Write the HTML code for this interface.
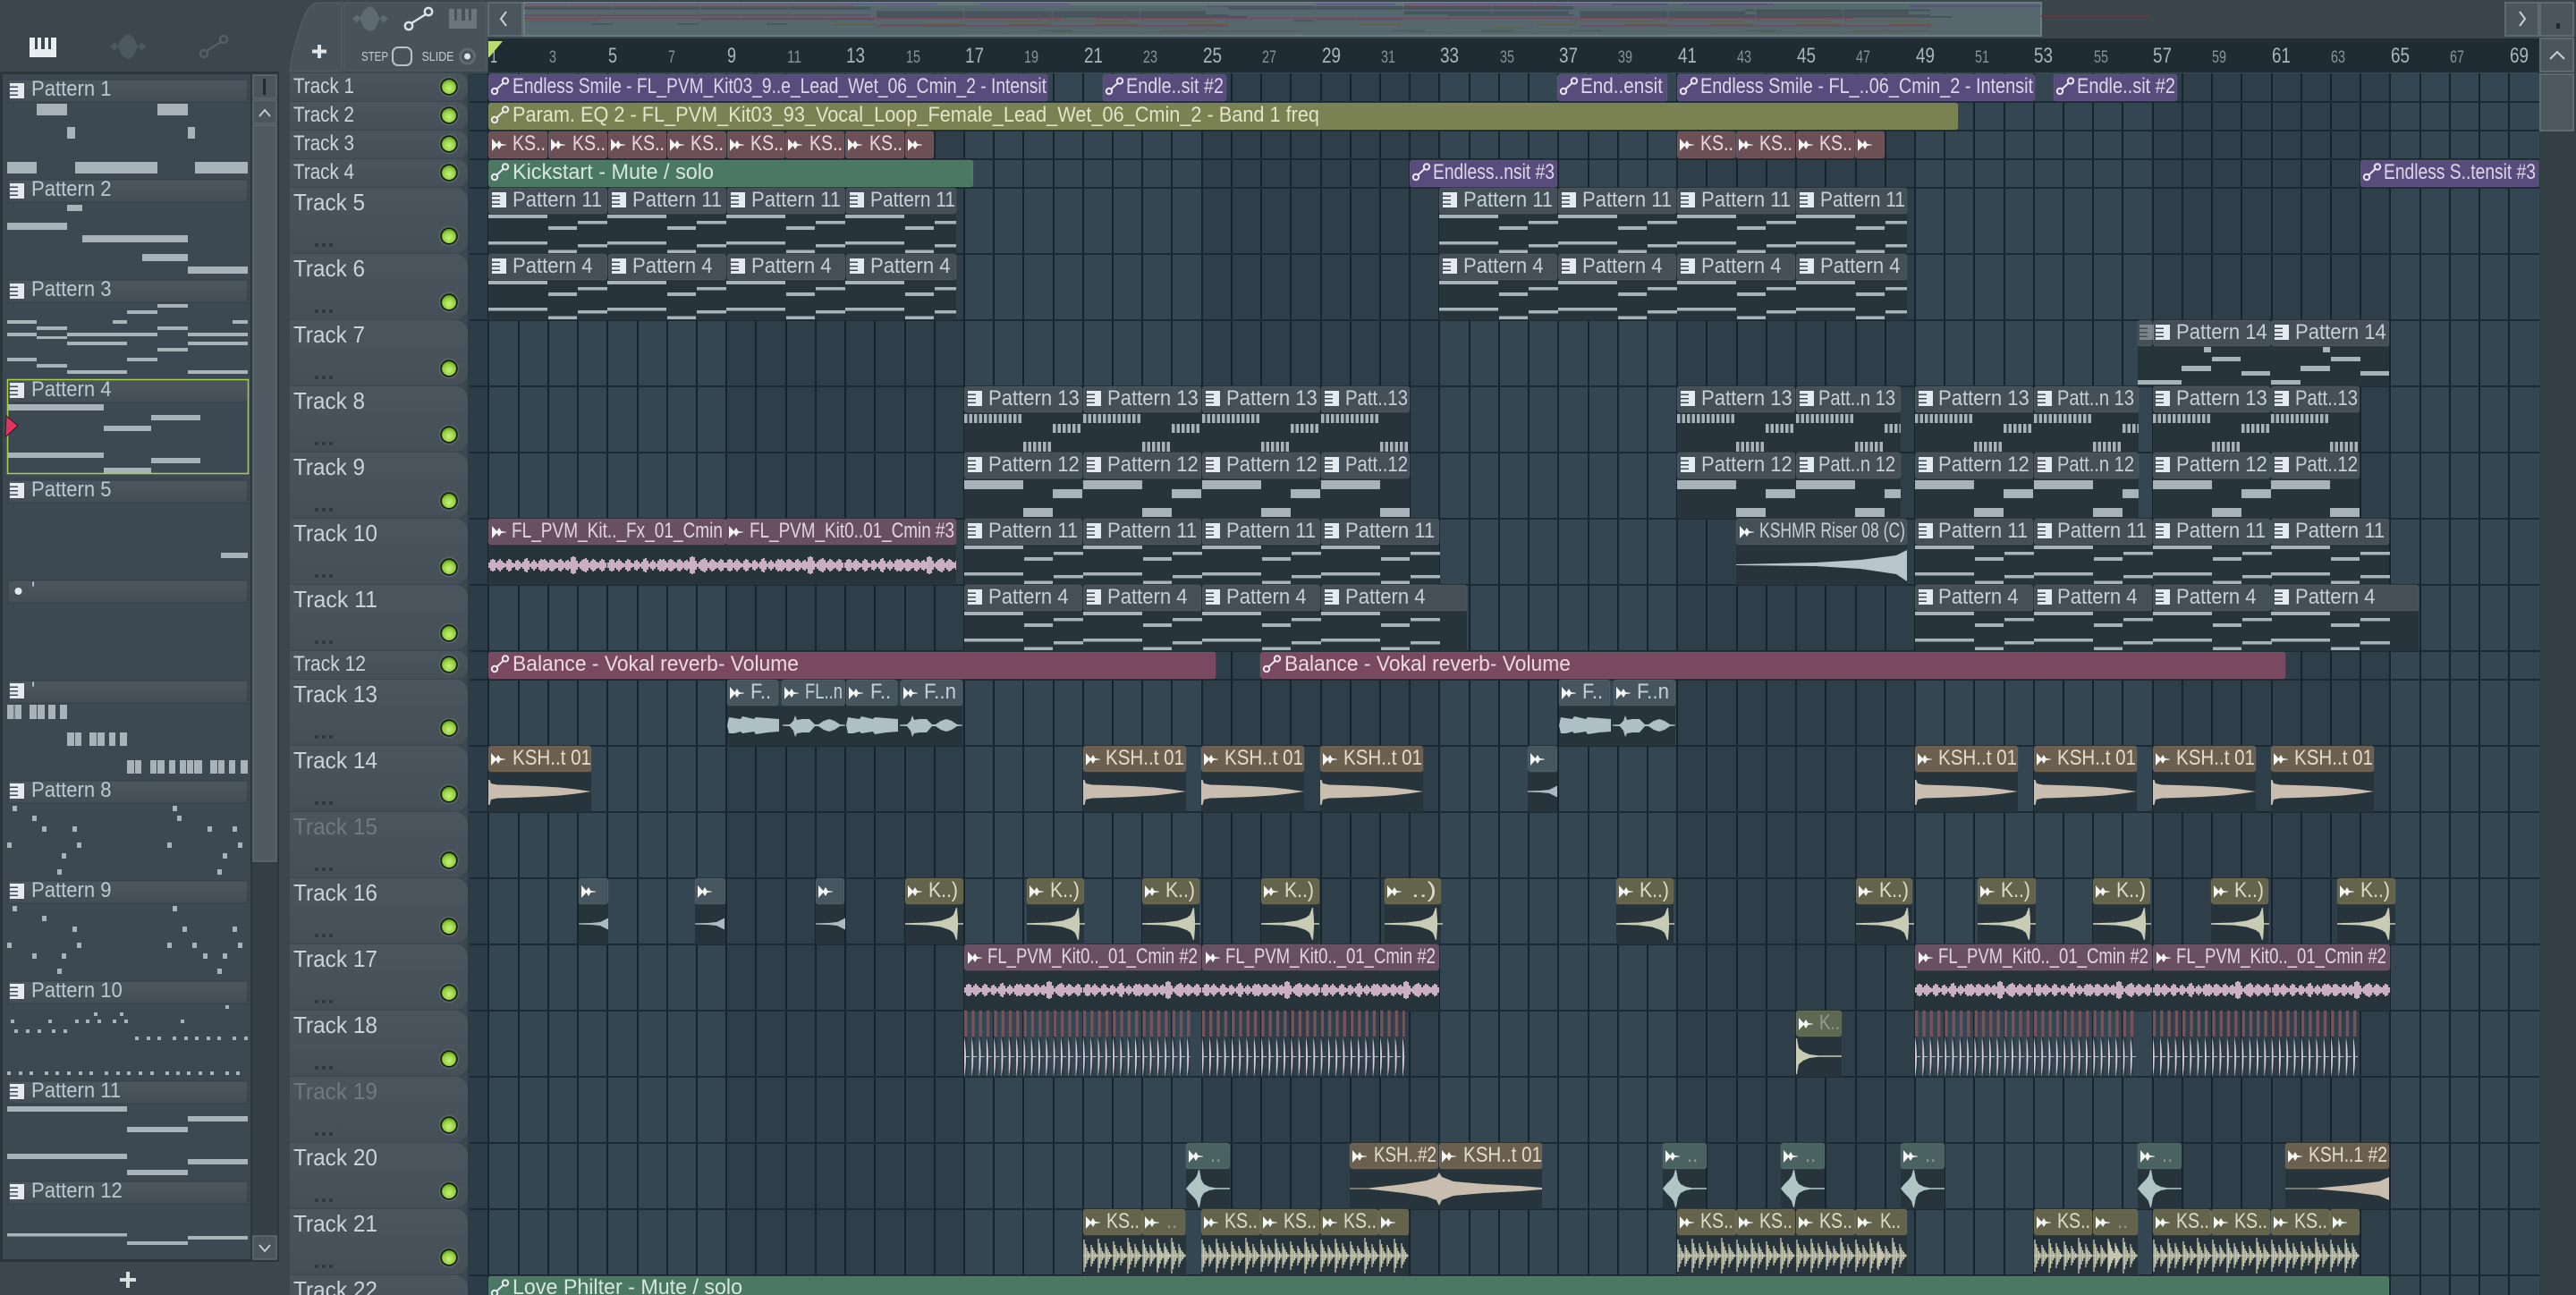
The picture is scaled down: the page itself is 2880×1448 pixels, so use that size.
<!DOCTYPE html>
<html><head><meta charset="utf-8"><title>Playlist</title>
<style>
html,body{margin:0;padding:0;background:#3b464d;width:2880px;height:1448px;overflow:hidden}
svg{display:block}
text{font-family:"Liberation Sans",sans-serif;font-size:24px}
text:not([textLength]){transform-box:fill-box;transform-origin:0 50%;transform:scaleX(.92)}
#heads rect{rx:3px;stroke:#fff;stroke-opacity:.07}
.big text{font-size:26px}
.s14 text{font-size:14.5px}
</style></head><body>
<svg width="2880" height="1448" viewBox="0 0 2880 1448" xmlns="http://www.w3.org/2000/svg">
<defs>
<linearGradient id="tg" x1="0" y1="0" x2="0" y2="1"><stop offset="0" stop-color="#4b555d"/><stop offset="1" stop-color="#454f58"/></linearGradient>
<linearGradient id="hg" x1="0" y1="0" x2="0" y2="1"><stop offset="0" stop-color="#4c565d"/><stop offset="1" stop-color="#444e56"/></linearGradient>
<radialGradient id="led" cx=".5" cy=".62" r=".6"><stop offset="0" stop-color="#c8f278"/><stop offset=".7" stop-color="#93cf3e"/><stop offset="1" stop-color="#5d9a1f"/></radialGradient>
<pattern id="tk" width="5.500" height="10" patternUnits="userSpaceOnUse"><rect width="3.500" height="10" fill="#a7b2b9"/></pattern>
<pattern id="s18" width="8.305" height="74" patternUnits="userSpaceOnUse" patternTransform="translate(1078,1130)">
<rect width="3.400" height="29" fill="#745359"/><rect y="30" width="3.400" height="44" fill="#2a3a44"/>
<path d="M0 30C2.600 42 2.600 62 0 74Z" fill="#dccbd4"/><rect y="51" width="6" height="1" fill="#cbbcc5"/></pattern>
<g id="pi"><path fill="#e3ebf0" d="M0 0H16V17H0Z"/><path fill="#3f4a52" d="M0 3.500H9V5H0ZM0 8H9V9.500H0ZM0 12.500H9V14H0Z"/></g>
<path id="au" fill="#f3f5f2" d="M0-1L5.500 5L8 1L10.500 5L16 5.800V6.400L10.500 7L8 11L5.500 7L0 13Z"/>
<g id="ln" fill="none" stroke="#e9e6f0" stroke-width="2"><circle cx="5" cy="15" r="3.200"/><circle cx="17" cy="3.500" r="3.200"/><path d="M7.500 12.500L14.500 6"/></g>
<g id="p11" fill="#a7b2b9"><path d="M0 30H66V34H0ZM67 43H99V47H67ZM100 37H133V40.500H100ZM0 60H66V63.500H0ZM67 69.500H99V73H67ZM100 63H133V66.500H100Z"/></g>
<g id="p12" fill="#a7b2b9"><path d="M0 31H66V41H0ZM66 62H99V72H66ZM99 41H132V51H99Z"/></g>
<g id="p13"><path fill="url(#tk)" d="M0 31H66V41H0ZM66 62H99V73H66ZM99 42H132V52H99Z"/></g>
<g id="w10"><path fill="none" stroke="#c9aec4" stroke-width="2.100" d="M1-3V3M3-6V6M5-7V7M7-6V6M9-3V3M11-5V5M13-7V7M15-5V5M17-3V3M19-2V2M21-5V5M23-7V7M25-6V6M27-3V3M29-2V2M31-5V5M33-6V6M35-4V4M37-2V2M39-4V4M41-7V7M43-8V8M45-5V5M47-2V2M49-4V4M51-6V6M53-4V4M55-2V2M57-5V5M59-7V7M61-6V6M63-7V7M65-5V5M67-3V3M69-6V6M71-7V7M73-6V6M75-4V4M77-3V3M79-6V6M81-7V7M83-5V5M85-3V3M87-5V5M89-6V6M91-4V4M93-9V9M95-10V10M97-9V9M99-5V5M101-2V2M103-4V4M105-6V6M107-7V7M109-8V8M111-6V6M113-3V3M115-5V5M117-7V7M119-6V6M121-4V4M123-3V3M125-5V5M127-7V7M129-6V6M131-3V3"/></g>
<path id="w14" fill="#c8bdae" d="M0-13L1.500-13L3-9L10-7.500L28-7L55-6L80-4.500L98-2.500L115 0L98 2.500L80 4.500L55 6L28 7L10 7.500L3 9L1.500 15L0 15Z"/>
<g id="w16a"><path fill="#a9bac2" d="M0-.6L14-1L24-2L30-5L33-6.500V6.500L30 5L24 2L14 1L0 .6Z"/></g>
<g id="w16b"><path fill="#c8ccb4" d="M0-.7L25-1.500L40-3.500L50-7L54-10L57-18L58-18L59-4V-.7H65V.7H59V4L58 18L57 18L54 10L50 7L40 3.500L25 1.500L0 .7Z"/></g>
<path id="w18" fill="#c8ccb4" d="M0-20H1L3-9L8-5L15-2L25-.8H51V.8H25L15 2L8 5L3 9L1 20H0Z"/>
<path id="w20" fill="#b0c6c4" d="M0 0L4-5L9-10L12-14L14-21L15-21L17-10L20-5L26-2L33-.8H49V.8H33L26 2L20 5L17 10L15 21L14 21L12 14L9 10L4 5Z"/>
<path id="f1" fill="#aebfc6" d="M0 0L2-9L8-8L15-7L17-10L30-7L32-9L45-8L58-7V7L45 8L32 10L30 7L17 9L15 7L8 9L2 9Z"/>
<path id="f2" fill="#aebfc6" d="M0-.6L8-1L12-5L14-11L16-6L22-7L30-7L36-1L40-1L46-5L52-7L58-5L64-1L70-.5V.5L64 1L58 5L52 7L46 5L40 1L36 1L30 8L22 8L16 9L14 13L12 6L8 1L0 .6Z"/>
<g id="sph"><path fill="none" stroke="#c6c7ae" stroke-width="1.300" d="M0 0H33M1-18V18M2.500-13V13M4-9V9M5.500-5V5M7-3V3M9-12V12M10.500-9V9M12-6V6M13.500-3.500V3.500M15-2V2M17-19V19M18.500-14V14M20-9V9M21.500-5V5M23-3V3M25-14V14M26.500-10V10M28-7V7M29.500-4V4M31-2V2"/></g>
<g id="sph2"><path fill="none" stroke="#c6c7ae" stroke-width="1.300" d="M0 0H33M1-16V16M2.500-12V12M4-8V8M5.500-5V5M7-3V3M9-11V11M10.500-8V8M12-5V5M13.500-3V3M15-2V2M17-20V20M18.500-15V15M20-10V10M21.500-6V6M23-3V3M25-13V13M26.500-9V9M28-6V6M29.500-4V4M31-2V2"/></g>
<g id="sp"><use href="#sph"/><use href="#sph2" x="33"/></g>
<path id="wv" d="M0 14L5.500 9.500L9 12.500L12.500 5.500L16 2.500L20.500 0L25 2.500L28 7.500L31 14L35 9.500L40.500 14L35 18.500L31 14L28 21L25 26L20.500 28L16 26L12.500 23L9 14L5.500 18.500Z"/>
<clipPath id="c10"><rect x="546" y="600" width="523" height="54"/></clipPath>

<g id="bods" fill="#28343c">
<path d="M546 239H1069V284H546ZM1609 239H2132V284H1609ZM546 313H1069V358H546ZM1609 313H2132V358H1609ZM2390 387H2671V432H2390ZM1078 461H1576V506H1078ZM1875 461H2125V506H1875ZM2141 461H2391V506H2141ZM2407 461H2638V506H2407ZM1078 535H1576V580H1078ZM1875 535H2125V580H1875ZM2141 535H2391V580H2141ZM2407 535H2638V580H2407ZM546 609H1069V654H546ZM1078 609H1609V654H1078ZM1941 609H2132V654H1941ZM2141 609H2671V654H2141ZM1078 683H1640V728H1078ZM2141 683H2704V728H2141ZM813 789H1076V834H813ZM1743 789H1873V834H1743ZM546 863H661V908H546ZM1211 863H1326V908H1211ZM1343 863H1458V908H1343ZM1476 863H1591V908H1476ZM1708 863H1741V908H1708ZM2141 863H2256V908H2141ZM2274 863H2389V908H2274ZM2407 863H2522V908H2407ZM2539 863H2654V908H2539ZM647 1011H680V1056H647ZM777 1011H811V1056H777ZM912 1011H944V1056H912ZM1012 1011H1077V1056H1012ZM1148 1011H1212V1056H1148ZM1277 1011H1341V1056H1277ZM1410 1011H1475V1056H1410ZM1548 1011H1611V1056H1548ZM1807 1011H1871V1056H1807ZM2075 1011H2138V1056H2075ZM2211 1011H2276V1056H2211ZM2340 1011H2404V1056H2340ZM2472 1011H2536V1056H2472ZM2613 1011H2678V1056H2613ZM1078 1085H1609V1130H1078ZM2141 1085H2672V1130H2141ZM2008 1159H2059V1204H2008ZM1326 1307H1375V1352H1326ZM1509 1307H1724V1352H1509ZM1859 1307H1907V1352H1859ZM1991 1307H2040V1352H1991ZM2125 1307H2174V1352H2125ZM2390 1307H2439V1352H2390ZM2555 1307H2671V1352H2555ZM1211 1381H1326V1426H1211ZM1343 1381H1575V1426H1343ZM1875 1381H2132V1426H1875ZM2274 1381H2390V1426H2274ZM2407 1381H2638V1426H2407Z"/>
</g>

<g id="heads">
<g fill="#584c7c">
<rect x="546" y="83" width="625" height="30"/><rect x="1233" y="83" width="138" height="30"/><rect x="1741" y="83" width="123" height="30"/><rect x="1875" y="83" width="400" height="30"/><rect x="2296" y="83" width="138" height="30"/>
<rect x="1576" y="179" width="165" height="30"/><rect x="2639" y="179" width="199" height="30"/>
</g>
<g fill="#7a8152"><rect x="546" y="115" width="1643" height="30"/></g>
<g fill="#6d5056">
<rect x="546" y="147" width="66" height="30"/><rect x="613" y="147" width="66" height="30"/><rect x="680" y="147" width="65" height="30"/><rect x="746" y="147" width="66" height="30"/><rect x="813" y="147" width="64" height="30"/><rect x="878" y="147" width="66" height="30"/><rect x="945" y="147" width="66" height="30"/><rect x="1012" y="147" width="32" height="30"/>
<rect x="1875" y="147" width="65" height="30"/><rect x="1941" y="147" width="66" height="30"/><rect x="2008" y="147" width="65" height="30"/><rect x="2074" y="147" width="33" height="30"/>
</g>
<g fill="#4a7862"><rect x="546" y="179" width="542" height="30"/><rect x="546" y="1427" width="2125" height="30"/></g>
<g fill="#454f57">
<rect x="546" y="210" width="133" height="29"/><rect x="680" y="210" width="132" height="29"/><rect x="813" y="210" width="132" height="29"/><rect x="946" y="210" width="123" height="29"/>
<rect x="1609" y="210" width="132" height="29"/><rect x="1742" y="210" width="132" height="29"/><rect x="1875" y="210" width="132" height="29"/><rect x="2008" y="210" width="124" height="29"/>
<rect x="546" y="284" width="133" height="29"/><rect x="680" y="284" width="132" height="29"/><rect x="813" y="284" width="132" height="29"/><rect x="946" y="284" width="123" height="29"/>
<rect x="1609" y="284" width="132" height="29"/><rect x="1742" y="284" width="132" height="29"/><rect x="1875" y="284" width="132" height="29"/><rect x="2008" y="284" width="124" height="29"/>
<rect x="2390" y="358" width="16" height="29"/><rect x="2407" y="358" width="131" height="29"/><rect x="2539" y="358" width="132" height="29"/>
<rect x="1078" y="432" width="132" height="29"/><rect x="1211" y="432" width="132" height="29"/><rect x="1344" y="432" width="132" height="29"/><rect x="1477" y="432" width="99" height="29"/><rect x="1875" y="432" width="132" height="29"/><rect x="2008" y="432" width="117" height="29"/><rect x="2141" y="432" width="132" height="29"/><rect x="2274" y="432" width="117" height="29"/><rect x="2407" y="432" width="131" height="29"/><rect x="2539" y="432" width="99" height="29"/>
<rect x="1078" y="506" width="132" height="29"/><rect x="1211" y="506" width="132" height="29"/><rect x="1344" y="506" width="132" height="29"/><rect x="1477" y="506" width="99" height="29"/><rect x="1875" y="506" width="132" height="29"/><rect x="2008" y="506" width="117" height="29"/><rect x="2141" y="506" width="132" height="29"/><rect x="2274" y="506" width="117" height="29"/><rect x="2407" y="506" width="131" height="29"/><rect x="2539" y="506" width="99" height="29"/>
<rect x="1078" y="580" width="132" height="29"/><rect x="1211" y="580" width="132" height="29"/><rect x="1344" y="580" width="132" height="29"/><rect x="1477" y="580" width="132" height="29"/><rect x="1941" y="580" width="191" height="29"/><rect x="2141" y="580" width="132" height="29"/><rect x="2274" y="580" width="132" height="29"/><rect x="2407" y="580" width="131" height="29"/><rect x="2539" y="580" width="132" height="29"/>
<rect x="1078" y="654" width="132" height="29"/><rect x="1211" y="654" width="132" height="29"/><rect x="1344" y="654" width="132" height="29"/><rect x="1477" y="654" width="163" height="29"/><rect x="2141" y="654" width="132" height="29"/><rect x="2274" y="654" width="132" height="29"/><rect x="2407" y="654" width="131" height="29"/><rect x="2539" y="654" width="165" height="29"/>
</g>
<g fill="#684f62">
<rect x="546" y="580" width="265" height="29"/><rect x="811" y="580" width="258" height="29"/>
<rect x="1078" y="1056" width="265" height="29"/><rect x="1344" y="1056" width="265" height="29"/><rect x="2141" y="1056" width="265" height="29"/><rect x="2407" y="1056" width="265" height="29"/>
</g>
<g fill="#78495f"><rect x="546" y="729" width="813" height="30"/><rect x="1409" y="729" width="1146" height="30"/></g>
<g fill="#47565e">
<rect x="813" y="760" width="57" height="29"/><rect x="874" y="760" width="71" height="29"/><rect x="946" y="760" width="57" height="29"/><rect x="1007" y="760" width="69" height="29"/><rect x="1743" y="760" width="57" height="29"/><rect x="1804" y="760" width="69" height="29"/>
<rect x="1708" y="834" width="33" height="29"/>
<rect x="647" y="982" width="33" height="29"/><rect x="777" y="982" width="34" height="29"/><rect x="912" y="982" width="32" height="29"/>
</g>
<g fill="#6b5f4f">
<rect x="546" y="834" width="115" height="29"/><rect x="1211" y="834" width="115" height="29"/><rect x="1343" y="834" width="115" height="29"/><rect x="1476" y="834" width="115" height="29"/><rect x="2141" y="834" width="115" height="29"/><rect x="2274" y="834" width="115" height="29"/><rect x="2407" y="834" width="115" height="29"/><rect x="2539" y="834" width="115" height="29"/>
<rect x="1509" y="1278" width="99" height="29"/><rect x="1609" y="1278" width="115" height="29"/><rect x="2555" y="1278" width="116" height="29"/>
</g>
<g fill="#64634b">
<rect x="1012" y="982" width="65" height="29"/><rect x="1148" y="982" width="64" height="29"/><rect x="1277" y="982" width="64" height="29"/><rect x="1410" y="982" width="65" height="29"/><rect x="1548" y="982" width="63" height="29"/><rect x="1807" y="982" width="64" height="29"/><rect x="2075" y="982" width="63" height="29"/><rect x="2211" y="982" width="65" height="29"/><rect x="2340" y="982" width="64" height="29"/><rect x="2472" y="982" width="64" height="29"/><rect x="2613" y="982" width="65" height="29"/>
<rect x="1211" y="1352" width="66" height="29"/><rect x="1277" y="1352" width="48" height="29"/><rect x="1343" y="1352" width="66" height="29"/><rect x="1409" y="1352" width="66" height="29"/><rect x="1476" y="1352" width="65" height="29"/><rect x="1541" y="1352" width="34" height="29"/>
<rect x="1875" y="1352" width="66" height="29"/><rect x="1941" y="1352" width="66" height="29"/><rect x="2008" y="1352" width="66" height="29"/><rect x="2074" y="1352" width="58" height="29"/>
<rect x="2274" y="1352" width="65" height="29"/><rect x="2340" y="1352" width="50" height="29"/><rect x="2407" y="1352" width="65" height="29"/><rect x="2472" y="1352" width="66" height="29"/><rect x="2539" y="1352" width="66" height="29"/><rect x="2605" y="1352" width="33" height="29"/>
</g>
<g fill="#5c6852"><rect x="2008" y="1130" width="51" height="29"/></g>
<g fill="#4a6360"><rect x="1326" y="1278" width="49" height="29"/><rect x="1859" y="1278" width="49" height="29"/><rect x="1991" y="1278" width="49" height="29"/><rect x="2125" y="1278" width="49" height="29"/><rect x="2390" y="1278" width="49" height="29"/></g>
</g>
</defs>

<!-- base -->
<rect width="2880" height="1448" fill="#3b464d"/>

<!-- grid -->
<rect x="523" y="82" width="2316" height="1366" fill="#344651"/>
<rect x="523" y="82" width="23" height="1366" fill="#2d3d47"/>
<path fill="#2e3f49" d="M812 82H1078V1448H812ZM1344 82H1609V1448H1344ZM1875 82H2141V1448H1875ZM2407 82H2672V1448H2407Z"/>
<path fill="none" stroke="#17242d" stroke-width="2" d="M546 82V1448M580 82V1448M613 82V1448M646 82V1448M679 82V1448M713 82V1448M746 82V1448M779 82V1448M812 82V1448M845 82V1448M879 82V1448M912 82V1448M945 82V1448M978 82V1448M1012 82V1448M1045 82V1448M1078 82V1448M1111 82V1448M1144 82V1448M1178 82V1448M1211 82V1448M1244 82V1448M1277 82V1448M1310 82V1448M1344 82V1448M1377 82V1448M1410 82V1448M1443 82V1448M1477 82V1448M1510 82V1448M1543 82V1448M1576 82V1448M1609 82V1448M1643 82V1448M1676 82V1448M1709 82V1448M1742 82V1448M1776 82V1448M1809 82V1448M1842 82V1448M1875 82V1448M1908 82V1448M1942 82V1448M1975 82V1448M2008 82V1448M2041 82V1448M2075 82V1448M2108 82V1448M2141 82V1448M2174 82V1448M2207 82V1448M2241 82V1448M2274 82V1448M2307 82V1448M2340 82V1448M2373 82V1448M2407 82V1448M2440 82V1448M2473 82V1448M2506 82V1448M2540 82V1448M2573 82V1448M2606 82V1448M2639 82V1448M2672 82V1448M2706 82V1448M2739 82V1448M2772 82V1448M2805 82V1448"/>
<path fill="none" stroke="#1c2a33" stroke-width="2" d="M523 114H2839M523 146H2839M523 178H2839M523 210H2839M523 284H2839M523 358H2839M523 432H2839M523 506H2839M523 580H2839M523 654H2839M523 728H2839M523 760H2839M523 834H2839M523 908H2839M523 982H2839M523 1056H2839M523 1130H2839M523 1204H2839M523 1278H2839M523 1352H2839M523 1426H2839"/>

<!-- clip bodies / headers -->
<use href="#bods"/>
<rect x="1078" y="1130" width="252.600" height="74" fill="url(#s18)"/>
<rect x="1343.700" y="1130" width="227" height="74" fill="url(#s18)"/>
<rect x="2141" y="1130" width="249" height="74" fill="url(#s18)"/>
<rect x="2407" y="1130" width="229" height="74" fill="url(#s18)"/>
<use href="#heads"/>

<!-- pattern notes -->
<use href="#p11" x="546" y="210"/><use href="#p11" x="679" y="210"/><use href="#p11" x="812" y="210"/><svg x="945" y="210" width="124" height="74"><use href="#p11"/></svg>
<use href="#p11" x="1609" y="210"/><use href="#p11" x="1742" y="210"/><use href="#p11" x="1875" y="210"/><svg x="2008" y="210" width="124" height="74"><use href="#p11"/></svg>
<use href="#p11" x="546" y="284"/><use href="#p11" x="679" y="284"/><use href="#p11" x="812" y="284"/><svg x="945" y="284" width="124" height="74"><use href="#p11"/></svg>
<use href="#p11" x="1609" y="284"/><use href="#p11" x="1742" y="284"/><use href="#p11" x="1875" y="284"/><svg x="2008" y="284" width="124" height="74"><use href="#p11"/></svg>
<path fill="#a7b2b9" d="M2390 425H2439V430H2390ZM2439 409H2472V415H2439ZM2464 388H2472V394H2464ZM2473 399H2505V404H2473ZM2506 415H2538V420H2506ZM2539 425H2572V430H2539ZM2572 409H2605V415H2572ZM2597 388H2605V394H2597ZM2606 399H2639V404H2606ZM2639 415H2671V420H2639Z"/>
<use href="#p13" x="1078" y="432"/><use href="#p13" x="1211" y="432"/><use href="#p13" x="1344" y="432"/><svg x="1477" y="432" width="99" height="74"><use href="#p13"/></svg><use href="#p13" x="1875" y="432"/><svg x="2008" y="432" width="117" height="74"><use href="#p13"/></svg><use href="#p13" x="2141" y="432"/><svg x="2274" y="432" width="117" height="74"><use href="#p13"/></svg><use href="#p13" x="2407" y="432"/><svg x="2539" y="432" width="99" height="74"><use href="#p13"/></svg>
<use href="#p12" x="1078" y="506"/><use href="#p12" x="1211" y="506"/><use href="#p12" x="1344" y="506"/><svg x="1477" y="506" width="99" height="74"><use href="#p12"/></svg><use href="#p12" x="1875" y="506"/><svg x="2008" y="506" width="117" height="74"><use href="#p12"/></svg><use href="#p12" x="2141" y="506"/><svg x="2274" y="506" width="117" height="74"><use href="#p12"/></svg><use href="#p12" x="2407" y="506"/><svg x="2539" y="506" width="99" height="74"><use href="#p12"/></svg>
<use href="#p11" x="1078" y="580"/><use href="#p11" x="1211" y="580"/><use href="#p11" x="1344" y="580"/><use href="#p11" x="1477" y="580"/><use href="#p11" x="2141" y="580"/><use href="#p11" x="2274" y="580"/><use href="#p11" x="2407" y="580"/><use href="#p11" x="2539" y="580"/>
<use href="#p11" x="1078" y="654"/><use href="#p11" x="1211" y="654"/><use href="#p11" x="1344" y="654"/><use href="#p11" x="1477" y="654"/><use href="#p11" x="2141" y="654"/><use href="#p11" x="2274" y="654"/><use href="#p11" x="2407" y="654"/><use href="#p11" x="2539" y="654"/>

<!-- waves -->
<g clip-path="url(#c10)"><use href="#w10" x="546" y="632"/><use href="#w10" x="679" y="632"/><use href="#w10" x="811" y="632"/><use href="#w10" x="944" y="632"/></g>
<use href="#w10" x="1078" y="1107"/><use href="#w10" x="1211" y="1107"/><use href="#w10" x="1344" y="1107"/><use href="#w10" x="1477" y="1107"/><use href="#w10" x="2141" y="1107"/><use href="#w10" x="2274" y="1107"/><use href="#w10" x="2407" y="1107"/><use href="#w10" x="2540" y="1107"/>
<path fill="#b9c5cc" d="M1941 631L2030 629L2080 626L2120 621L2132 615V650L2120 642L2080 636L2030 633L1941 632Z"/>
<use href="#f1" x="813" y="811"/><use href="#f2" x="875" y="811"/><use href="#f1" x="946" y="811"/><use href="#f2" x="1006" y="811"/><use href="#f1" x="1743" y="811"/><use href="#f2" x="1803" y="811"/>
<use href="#w14" x="546" y="885"/><use href="#w14" x="1211" y="885"/><use href="#w14" x="1343" y="885"/><use href="#w14" x="1476" y="885"/><use href="#w14" x="2141" y="885"/><use href="#w14" x="2274" y="885"/><use href="#w14" x="2407" y="885"/><use href="#w14" x="2539" y="885"/>
<use href="#w16a" x="1708" y="885"/>
<use href="#w16a" x="647" y="1033"/><use href="#w16a" x="777" y="1033"/><use href="#w16a" x="912" y="1033"/>
<use href="#w16b" x="1012" y="1033"/><use href="#w16b" x="1148" y="1033"/><use href="#w16b" x="1277" y="1033"/><use href="#w16b" x="1410" y="1033"/><use href="#w16b" x="1548" y="1033"/><use href="#w16b" x="1807" y="1033"/><use href="#w16b" x="2075" y="1033"/><use href="#w16b" x="2211" y="1033"/><use href="#w16b" x="2340" y="1033"/><use href="#w16b" x="2472" y="1033"/><use href="#w16b" x="2613" y="1033"/>
<use href="#w18" x="2008" y="1181"/>
<use href="#w20" x="1326" y="1329"/><use href="#w20" x="1859" y="1329"/><use href="#w20" x="1991" y="1329"/><use href="#w20" x="2125" y="1329"/><use href="#w20" x="2390" y="1329"/>
<path fill="#c8bdae" d="M1509 1328.500H1530L1570 1324L1595 1320L1606 1316L1609 1311L1612 1316L1625 1321L1660 1324L1700 1326L1724 1328V1330L1700 1332L1660 1334L1625 1337L1612 1342L1609 1348L1606 1342L1595 1338L1570 1334L1530 1329.500H1509Z"/>
<path fill="#c8bdae" d="M2555 1328.500H2590L2630 1325L2660 1321L2671 1316V1342L2660 1337L2630 1333L2590 1329.500H2555Z"/>
<use href="#sp" x="1211" y="1404"/><use href="#sph" x="1277" y="1404"/><use href="#sph2" x="1293" y="1404"/>
<use href="#sp" x="1343" y="1404"/><use href="#sp" x="1409" y="1404"/><use href="#sph" x="1476" y="1404"/><use href="#sph2" x="1509" y="1404"/><use href="#sph" x="1542" y="1404"/>
<use href="#sp" x="1875" y="1404"/><use href="#sp" x="1941" y="1404"/><use href="#sp" x="2008" y="1404"/><use href="#sph" x="2074" y="1404"/><use href="#sph2" x="2099" y="1404"/>
<use href="#sp" x="2274" y="1404"/><use href="#sph" x="2340" y="1404"/><use href="#sph2" x="2357" y="1404"/>
<use href="#sp" x="2407" y="1404"/><use href="#sp" x="2473" y="1404"/><use href="#sp" x="2539" y="1404"/><use href="#sph" x="2605" y="1404"/>

<!-- clip icons -->
<use href="#ln" x="548" y="87"/><use href="#ln" x="1235" y="87"/><use href="#ln" x="1743" y="87"/><use href="#ln" x="1877" y="87"/><use href="#ln" x="2298" y="87"/>
<use href="#ln" x="548" y="119"/><use href="#ln" x="548" y="183"/><use href="#ln" x="1578" y="183"/><use href="#ln" x="2641" y="183"/><use href="#ln" x="548" y="733"/><use href="#ln" x="1411" y="733"/><use href="#ln" x="548" y="1431"/>
<g>
<use href="#au" x="550" y="156"/><use href="#au" x="616" y="156"/><use href="#au" x="683" y="156"/><use href="#au" x="749" y="156"/><use href="#au" x="816" y="156"/><use href="#au" x="881" y="156"/><use href="#au" x="948" y="156"/><use href="#au" x="1015" y="156"/><use href="#au" x="1878" y="156"/><use href="#au" x="1944" y="156"/><use href="#au" x="2011" y="156"/><use href="#au" x="2077" y="156"/>
<use href="#au" x="550" y="589"/><use href="#au" x="815" y="589"/><use href="#au" x="1945" y="589"/>
<use href="#au" x="816" y="769"/><use href="#au" x="877" y="769"/><use href="#au" x="949" y="769"/><use href="#au" x="1010" y="769"/><use href="#au" x="1746" y="769"/><use href="#au" x="1807" y="769"/>
<use href="#au" x="549" y="843"/><use href="#au" x="1214" y="843"/><use href="#au" x="1346" y="843"/><use href="#au" x="1479" y="843"/><use href="#au" x="1711" y="843"/><use href="#au" x="2144" y="843"/><use href="#au" x="2277" y="843"/><use href="#au" x="2410" y="843"/><use href="#au" x="2542" y="843"/>
<use href="#au" x="650" y="991"/><use href="#au" x="780" y="991"/><use href="#au" x="915" y="991"/><use href="#au" x="1015" y="991"/><use href="#au" x="1151" y="991"/><use href="#au" x="1280" y="991"/><use href="#au" x="1413" y="991"/><use href="#au" x="1551" y="991"/><use href="#au" x="1810" y="991"/><use href="#au" x="2078" y="991"/><use href="#au" x="2214" y="991"/><use href="#au" x="2343" y="991"/><use href="#au" x="2475" y="991"/><use href="#au" x="2616" y="991"/>
<use href="#au" x="1082" y="1065"/><use href="#au" x="1348" y="1065"/><use href="#au" x="2145" y="1065"/><use href="#au" x="2411" y="1065"/>
<use href="#au" x="2011" y="1139"/>
<use href="#au" x="1329" y="1287"/><use href="#au" x="1512" y="1287"/><use href="#au" x="1612" y="1287"/><use href="#au" x="1862" y="1287"/><use href="#au" x="1994" y="1287"/><use href="#au" x="2128" y="1287"/><use href="#au" x="2393" y="1287"/><use href="#au" x="2558" y="1287"/>
<use href="#au" x="1214" y="1361"/><use href="#au" x="1280" y="1361"/><use href="#au" x="1346" y="1361"/><use href="#au" x="1412" y="1361"/><use href="#au" x="1479" y="1361"/><use href="#au" x="1544" y="1361"/><use href="#au" x="1878" y="1361"/><use href="#au" x="1944" y="1361"/><use href="#au" x="2011" y="1361"/><use href="#au" x="2077" y="1361"/><use href="#au" x="2277" y="1361"/><use href="#au" x="2343" y="1361"/><use href="#au" x="2410" y="1361"/><use href="#au" x="2475" y="1361"/><use href="#au" x="2542" y="1361"/><use href="#au" x="2608" y="1361"/>
</g>
<g>
<use href="#pi" x="550" y="215"/><use href="#pi" x="684" y="215"/><use href="#pi" x="817" y="215"/><use href="#pi" x="950" y="215"/><use href="#pi" x="1613" y="215"/><use href="#pi" x="1746" y="215"/><use href="#pi" x="1879" y="215"/><use href="#pi" x="2012" y="215"/>
<use href="#pi" x="550" y="289"/><use href="#pi" x="684" y="289"/><use href="#pi" x="817" y="289"/><use href="#pi" x="950" y="289"/><use href="#pi" x="1613" y="289"/><use href="#pi" x="1746" y="289"/><use href="#pi" x="1879" y="289"/><use href="#pi" x="2012" y="289"/>
<use href="#pi" x="2392" y="363" opacity=".35"/><use href="#pi" x="2410" y="363"/><use href="#pi" x="2543" y="363"/>
<use href="#pi" x="1082" y="437"/><use href="#pi" x="1215" y="437"/><use href="#pi" x="1348" y="437"/><use href="#pi" x="1481" y="437"/><use href="#pi" x="1879" y="437"/><use href="#pi" x="2012" y="437"/><use href="#pi" x="2145" y="437"/><use href="#pi" x="2278" y="437"/><use href="#pi" x="2410" y="437"/><use href="#pi" x="2543" y="437"/>
<use href="#pi" x="1082" y="511"/><use href="#pi" x="1215" y="511"/><use href="#pi" x="1348" y="511"/><use href="#pi" x="1481" y="511"/><use href="#pi" x="1879" y="511"/><use href="#pi" x="2012" y="511"/><use href="#pi" x="2145" y="511"/><use href="#pi" x="2278" y="511"/><use href="#pi" x="2410" y="511"/><use href="#pi" x="2543" y="511"/>
<use href="#pi" x="1082" y="585"/><use href="#pi" x="1215" y="585"/><use href="#pi" x="1348" y="585"/><use href="#pi" x="1481" y="585"/><use href="#pi" x="2145" y="585"/><use href="#pi" x="2278" y="585"/><use href="#pi" x="2410" y="585"/><use href="#pi" x="2543" y="585"/>
<use href="#pi" x="1082" y="659"/><use href="#pi" x="1215" y="659"/><use href="#pi" x="1348" y="659"/><use href="#pi" x="1481" y="659"/><use href="#pi" x="2145" y="659"/><use href="#pi" x="2278" y="659"/><use href="#pi" x="2410" y="659"/><use href="#pi" x="2543" y="659"/>
</g>

<!-- clip text -->
<g fill="#dcd6e8">
<text x="573" y="104" textLength="597" lengthAdjust="spacingAndGlyphs">Endless Smile - FL_PVM_Kit03_9..e_Lead_Wet_06_Cmin_2 - Intensit</text>
<text x="1259" y="104" textLength="109" lengthAdjust="spacingAndGlyphs">Endle..sit #2</text>
<text x="1767" y="104" textLength="92" lengthAdjust="spacingAndGlyphs">End..ensit</text>
<text x="1901" y="104" textLength="372" lengthAdjust="spacingAndGlyphs">Endless Smile - FL_..06_Cmin_2 - Intensit</text>
<text x="2322" y="104" textLength="110" lengthAdjust="spacingAndGlyphs">Endle..sit #2</text>
<text x="1602" y="200" textLength="136" lengthAdjust="spacingAndGlyphs">Endless..nsit #3</text>
<text x="2665" y="200" textLength="170" lengthAdjust="spacingAndGlyphs">Endless S..tensit #3</text>
</g>
<text fill="#e2e5c8" x="573" y="136" textLength="902" lengthAdjust="spacingAndGlyphs">Param. EQ 2 - FL_PVM_Kit03_93_Vocal_Loop_Female_Lead_Wet_06_Cmin_2 - Band 1 freq</text>
<g fill="#e8d8dc">
<text x="573" y="168" textLength="37" lengthAdjust="spacingAndGlyphs">KS..</text><text x="640" y="168" textLength="37" lengthAdjust="spacingAndGlyphs">KS..</text><text x="706" y="168" textLength="37" lengthAdjust="spacingAndGlyphs">KS..</text><text x="772" y="168" textLength="37" lengthAdjust="spacingAndGlyphs">KS..</text><text x="839" y="168" textLength="37" lengthAdjust="spacingAndGlyphs">KS..</text><text x="905" y="168" textLength="37" lengthAdjust="spacingAndGlyphs">KS..</text><text x="972" y="168" textLength="37" lengthAdjust="spacingAndGlyphs">KS..</text>
<text x="1901" y="168" textLength="37" lengthAdjust="spacingAndGlyphs">KS..</text><text x="1967" y="168" textLength="37" lengthAdjust="spacingAndGlyphs">KS..</text><text x="2034" y="168" textLength="37" lengthAdjust="spacingAndGlyphs">KS..</text>
</g>
<g fill="#d6e8dc">
<text x="573" y="200" textLength="225" lengthAdjust="spacingAndGlyphs">Kickstart - Mute / solo</text>
<text x="573" y="1447" textLength="257" lengthAdjust="spacingAndGlyphs">Love Philter - Mute / solo</text>
</g>
<g fill="#c4d0d6">
<text x="573" y="231">Pattern 11</text><text x="707" y="231">Pattern 11</text><text x="840" y="231">Pattern 11</text><text x="973" y="231" textLength="95" lengthAdjust="spacingAndGlyphs">Pattern 11</text>
<text x="1636" y="231">Pattern 11</text><text x="1769" y="231">Pattern 11</text><text x="1902" y="231">Pattern 11</text><text x="2035" y="231" textLength="95" lengthAdjust="spacingAndGlyphs">Pattern 11</text>
<text x="573" y="305">Pattern 4</text><text x="707" y="305">Pattern 4</text><text x="840" y="305">Pattern 4</text><text x="973" y="305">Pattern 4</text>
<text x="1636" y="305">Pattern 4</text><text x="1769" y="305">Pattern 4</text><text x="1902" y="305">Pattern 4</text><text x="2035" y="305">Pattern 4</text>
<text x="2433" y="379">Pattern 14</text><text x="2566" y="379">Pattern 14</text>
<text x="1105" y="453">Pattern 13</text><text x="1238" y="453">Pattern 13</text><text x="1371" y="453">Pattern 13</text><text x="1504" y="453" textLength="70" lengthAdjust="spacingAndGlyphs">Patt..13</text>
<text x="1902" y="453">Pattern 13</text><text x="2033" y="453" textLength="86" lengthAdjust="spacingAndGlyphs">Patt..n 13</text><text x="2167" y="453">Pattern 13</text><text x="2300" y="453" textLength="86" lengthAdjust="spacingAndGlyphs">Patt..n 13</text><text x="2433" y="453">Pattern 13</text><text x="2566" y="453" textLength="70" lengthAdjust="spacingAndGlyphs">Patt..13</text>
<text x="1105" y="527">Pattern 12</text><text x="1238" y="527">Pattern 12</text><text x="1371" y="527">Pattern 12</text><text x="1504" y="527" textLength="70" lengthAdjust="spacingAndGlyphs">Patt..12</text>
<text x="1902" y="527">Pattern 12</text><text x="2033" y="527" textLength="86" lengthAdjust="spacingAndGlyphs">Patt..n 12</text><text x="2167" y="527">Pattern 12</text><text x="2300" y="527" textLength="86" lengthAdjust="spacingAndGlyphs">Patt..n 12</text><text x="2433" y="527">Pattern 12</text><text x="2566" y="527" textLength="70" lengthAdjust="spacingAndGlyphs">Patt..12</text>
<text x="1105" y="601">Pattern 11</text><text x="1238" y="601">Pattern 11</text><text x="1371" y="601">Pattern 11</text><text x="1504" y="601">Pattern 11</text>
<text x="2167" y="601">Pattern 11</text><text x="2300" y="601">Pattern 11</text><text x="2433" y="601">Pattern 11</text><text x="2566" y="601">Pattern 11</text>
<text x="1967" y="601" textLength="163" lengthAdjust="spacingAndGlyphs">KSHMR Riser 08 (C)</text>
<text x="1105" y="675">Pattern 4</text><text x="1238" y="675">Pattern 4</text><text x="1371" y="675">Pattern 4</text><text x="1504" y="675">Pattern 4</text>
<text x="2167" y="675">Pattern 4</text><text x="2300" y="675">Pattern 4</text><text x="2433" y="675">Pattern 4</text><text x="2566" y="675">Pattern 4</text>
<text x="839" y="781" textLength="23" lengthAdjust="spacingAndGlyphs">F..</text><text x="900" y="781" textLength="42" lengthAdjust="spacingAndGlyphs">FL..n</text><text x="973" y="781" textLength="23" lengthAdjust="spacingAndGlyphs">F..</text><text x="1033" y="781" textLength="36" lengthAdjust="spacingAndGlyphs">F..n</text>
<text x="1769" y="781" textLength="23" lengthAdjust="spacingAndGlyphs">F..</text><text x="1830" y="781" textLength="36" lengthAdjust="spacingAndGlyphs">F..n</text>
</g>
<g fill="#e0d4e2">
<text x="572" y="601" textLength="236" lengthAdjust="spacingAndGlyphs">FL_PVM_Kit.._Fx_01_Cmin</text>
<text x="838" y="601" textLength="229" lengthAdjust="spacingAndGlyphs">FL_PVM_Kit0..01_Cmin #3</text>
<text x="1104" y="1077" textLength="235" lengthAdjust="spacingAndGlyphs">FL_PVM_Kit0.._01_Cmin #2</text><text x="1370" y="1077" textLength="235" lengthAdjust="spacingAndGlyphs">FL_PVM_Kit0.._01_Cmin #2</text><text x="2167" y="1077" textLength="235" lengthAdjust="spacingAndGlyphs">FL_PVM_Kit0.._01_Cmin #2</text><text x="2433" y="1077" textLength="235" lengthAdjust="spacingAndGlyphs">FL_PVM_Kit0.._01_Cmin #2</text>
</g>
<g fill="#ecd8e0">
<text x="573" y="750" textLength="320" lengthAdjust="spacingAndGlyphs">Balance - Vokal reverb- Volume</text>
<text x="1436" y="750" textLength="320" lengthAdjust="spacingAndGlyphs">Balance - Vokal reverb- Volume</text>
</g>
<g fill="#e2dccb">
<text x="573" y="855" textLength="88" lengthAdjust="spacingAndGlyphs">KSH..t 01</text><text x="1236" y="855" textLength="88" lengthAdjust="spacingAndGlyphs">KSH..t 01</text><text x="1369" y="855" textLength="88" lengthAdjust="spacingAndGlyphs">KSH..t 01</text><text x="1502" y="855" textLength="88" lengthAdjust="spacingAndGlyphs">KSH..t 01</text><text x="2167" y="855" textLength="88" lengthAdjust="spacingAndGlyphs">KSH..t 01</text><text x="2300" y="855" textLength="88" lengthAdjust="spacingAndGlyphs">KSH..t 01</text><text x="2433" y="855" textLength="88" lengthAdjust="spacingAndGlyphs">KSH..t 01</text><text x="2565" y="855" textLength="88" lengthAdjust="spacingAndGlyphs">KSH..t 01</text>
<text x="1536" y="1299" textLength="70" lengthAdjust="spacingAndGlyphs">KSH..#2</text><text x="1636" y="1299" textLength="88" lengthAdjust="spacingAndGlyphs">KSH..t 01</text><text x="2581" y="1299" textLength="88" lengthAdjust="spacingAndGlyphs">KSH..1 #2</text>
</g>
<g fill="#dcdcc8">
<text x="1038" y="1003" textLength="33" lengthAdjust="spacingAndGlyphs">K..)</text><text x="1174" y="1003" textLength="33" lengthAdjust="spacingAndGlyphs">K..)</text><text x="1303" y="1003" textLength="33" lengthAdjust="spacingAndGlyphs">K..)</text><text x="1436" y="1003" textLength="33" lengthAdjust="spacingAndGlyphs">K..)</text><text x="1578" y="1003" textLength="28" lengthAdjust="spacingAndGlyphs">..)</text><text x="1833" y="1003" textLength="33" lengthAdjust="spacingAndGlyphs">K..)</text><text x="2101" y="1003" textLength="33" lengthAdjust="spacingAndGlyphs">K..)</text><text x="2237" y="1003" textLength="33" lengthAdjust="spacingAndGlyphs">K..)</text><text x="2366" y="1003" textLength="33" lengthAdjust="spacingAndGlyphs">K..)</text><text x="2498" y="1003" textLength="33" lengthAdjust="spacingAndGlyphs">K..)</text><text x="2639" y="1003" textLength="33" lengthAdjust="spacingAndGlyphs">K..)</text>
<text x="1237" y="1373" textLength="37" lengthAdjust="spacingAndGlyphs">KS..</text><text x="1369" y="1373" textLength="37" lengthAdjust="spacingAndGlyphs">KS..</text><text x="1435" y="1373" textLength="37" lengthAdjust="spacingAndGlyphs">KS..</text><text x="1502" y="1373" textLength="37" lengthAdjust="spacingAndGlyphs">KS..</text>
<text x="1901" y="1373" textLength="37" lengthAdjust="spacingAndGlyphs">KS..</text><text x="1967" y="1373" textLength="37" lengthAdjust="spacingAndGlyphs">KS..</text><text x="2034" y="1373" textLength="37" lengthAdjust="spacingAndGlyphs">KS..</text><text x="2102" y="1373" textLength="23" lengthAdjust="spacingAndGlyphs">K..</text>
<text x="2300" y="1373" textLength="37" lengthAdjust="spacingAndGlyphs">KS..</text><text x="2433" y="1373" textLength="37" lengthAdjust="spacingAndGlyphs">KS..</text><text x="2498" y="1373" textLength="37" lengthAdjust="spacingAndGlyphs">KS..</text><text x="2565" y="1373" textLength="37" lengthAdjust="spacingAndGlyphs">KS..</text>
</g>
<g fill="#8f9c90">
<text x="2034" y="1151" textLength="23" lengthAdjust="spacingAndGlyphs">K..</text>
<text x="1353" y="1299">..</text><text x="1886" y="1299">..</text><text x="2018" y="1299">..</text><text x="2152" y="1299">..</text><text x="2417" y="1299">..</text>
<text x="1304" y="1373">..</text><text x="2367" y="1373">..</text>
</g>

<!-- top bar / timeline -->
<rect x="546" y="0" width="2334" height="43" fill="#3a454c"/>
<rect x="546" y="43" width="2293" height="38" fill="#1f2c33"/>
<rect x="586" y="3" width="1696" height="37" fill="#56676e" stroke="#6c7d85" stroke-width="2"/>
<svg x="586" y="4" width="1696" height="35"><g transform="scale(.74,.0245) translate(-546,-82)"><use href="#bods" opacity=".18"/><use href="#heads"/><use href="#heads" y="20"/></g></svg>
<rect x="2282" y="17" width="122" height="2" fill="#6b3638"/>
<rect x="546" y="3" width="38" height="37" fill="#4a555d" stroke="#5e6a71" stroke-width="2"/>
<path d="M566 13L560 21L566 29" fill="none" stroke="#c7d0d5" stroke-width="2"/>
<rect x="2801" y="3" width="37" height="37" fill="#4a555d" stroke="#5e6a71" stroke-width="2"/>
<path d="M2817 13L2823 21L2817 29" fill="none" stroke="#c7d0d5" stroke-width="2"/>
<rect x="2840" y="3" width="37" height="37" fill="#4a555d" stroke="#5e6a71" stroke-width="2"/>
<rect x="2858" y="26" width="4" height="6" fill="#1f2b32"/>
<g fill="#a9b6bd">
<text style="font-size:24px" x="548" y="70" textLength="8" lengthAdjust="spacingAndGlyphs">1</text>
<text style="font-size:24px" x="680" y="70" textLength="10" lengthAdjust="spacingAndGlyphs">5</text><text style="font-size:24px" x="813" y="70" textLength="10" lengthAdjust="spacingAndGlyphs">9</text><text style="font-size:24px" x="946" y="70" textLength="21" lengthAdjust="spacingAndGlyphs">13</text><text style="font-size:24px" x="1079" y="70" textLength="21" lengthAdjust="spacingAndGlyphs">17</text><text style="font-size:24px" x="1212" y="70" textLength="21" lengthAdjust="spacingAndGlyphs">21</text><text style="font-size:24px" x="1345" y="70" textLength="21" lengthAdjust="spacingAndGlyphs">25</text><text style="font-size:24px" x="1478" y="70" textLength="21" lengthAdjust="spacingAndGlyphs">29</text><text style="font-size:24px" x="1610" y="70" textLength="21" lengthAdjust="spacingAndGlyphs">33</text><text style="font-size:24px" x="1743" y="70" textLength="21" lengthAdjust="spacingAndGlyphs">37</text><text style="font-size:24px" x="1876" y="70" textLength="21" lengthAdjust="spacingAndGlyphs">41</text><text style="font-size:24px" x="2009" y="70" textLength="21" lengthAdjust="spacingAndGlyphs">45</text><text style="font-size:24px" x="2142" y="70" textLength="21" lengthAdjust="spacingAndGlyphs">49</text><text style="font-size:24px" x="2274" y="70" textLength="21" lengthAdjust="spacingAndGlyphs">53</text><text style="font-size:24px" x="2407" y="70" textLength="21" lengthAdjust="spacingAndGlyphs">57</text><text style="font-size:24px" x="2540" y="70" textLength="21" lengthAdjust="spacingAndGlyphs">61</text><text style="font-size:24px" x="2673" y="70" textLength="21" lengthAdjust="spacingAndGlyphs">65</text><text style="font-size:24px" x="2806" y="70" textLength="21" lengthAdjust="spacingAndGlyphs">69</text>
</g>
<g fill="#85939b">
<text style="font-size:19px" x="614" y="70" textLength="8" lengthAdjust="spacingAndGlyphs">3</text><text style="font-size:19px" x="747" y="70" textLength="8" lengthAdjust="spacingAndGlyphs">7</text><text style="font-size:19px" x="880" y="70" textLength="16" lengthAdjust="spacingAndGlyphs">11</text><text style="font-size:19px" x="1013" y="70" textLength="16" lengthAdjust="spacingAndGlyphs">15</text><text style="font-size:19px" x="1145" y="70" textLength="16" lengthAdjust="spacingAndGlyphs">19</text><text style="font-size:19px" x="1278" y="70" textLength="16" lengthAdjust="spacingAndGlyphs">23</text><text style="font-size:19px" x="1411" y="70" textLength="16" lengthAdjust="spacingAndGlyphs">27</text><text style="font-size:19px" x="1544" y="70" textLength="16" lengthAdjust="spacingAndGlyphs">31</text><text style="font-size:19px" x="1677" y="70" textLength="16" lengthAdjust="spacingAndGlyphs">35</text><text style="font-size:19px" x="1809" y="70" textLength="16" lengthAdjust="spacingAndGlyphs">39</text><text style="font-size:19px" x="1942" y="70" textLength="16" lengthAdjust="spacingAndGlyphs">43</text><text style="font-size:19px" x="2075" y="70" textLength="16" lengthAdjust="spacingAndGlyphs">47</text><text style="font-size:19px" x="2208" y="70" textLength="16" lengthAdjust="spacingAndGlyphs">51</text><text style="font-size:19px" x="2341" y="70" textLength="16" lengthAdjust="spacingAndGlyphs">55</text><text style="font-size:19px" x="2473" y="70" textLength="16" lengthAdjust="spacingAndGlyphs">59</text><text style="font-size:19px" x="2606" y="70" textLength="16" lengthAdjust="spacingAndGlyphs">63</text><text style="font-size:19px" x="2739" y="70" textLength="16" lengthAdjust="spacingAndGlyphs">67</text>
</g>
<path d="M546 46H562L547 64H546Z" fill="#bcdc74"/>

<!-- right scrollbar -->
<rect x="2839" y="42" width="41" height="1406" fill="#343e45"/>
<rect x="2840" y="43" width="37" height="37" fill="#4a555d" stroke="#5e6a71" stroke-width="2"/>
<path d="M2851 66L2859 58L2867 66" fill="none" stroke="#c7d0d5" stroke-width="2"/>
<rect x="2840" y="83" width="37" height="63" fill="#4c575f" stroke="#5e6a71" stroke-width="2"/>

<!-- track panel -->
<rect x="523" y="82" width="2" height="1366" fill="#2c3a44"/>
<g fill="url(#tg)">
<rect x="300" y="82" width="223" height="31" rx="12"/><rect x="300" y="114" width="223" height="31" rx="12"/><rect x="300" y="146" width="223" height="31" rx="12"/><rect x="300" y="178" width="223" height="31" rx="12"/>
<rect x="300" y="210" width="223" height="73" rx="14"/><rect x="300" y="284" width="223" height="73" rx="14"/><rect x="300" y="358" width="223" height="73" rx="14"/><rect x="300" y="432" width="223" height="73" rx="14"/><rect x="300" y="506" width="223" height="73" rx="14"/><rect x="300" y="580" width="223" height="73" rx="14"/><rect x="300" y="654" width="223" height="73" rx="14"/>
<rect x="300" y="728" width="223" height="31" rx="12"/>
<rect x="300" y="760" width="223" height="73" rx="14"/><rect x="300" y="834" width="223" height="73" rx="14"/><rect x="300" y="908" width="223" height="73" rx="14"/><rect x="300" y="982" width="223" height="73" rx="14"/><rect x="300" y="1056" width="223" height="73" rx="14"/><rect x="300" y="1130" width="223" height="73" rx="14"/><rect x="300" y="1204" width="223" height="73" rx="14"/><rect x="300" y="1278" width="223" height="73" rx="14"/><rect x="300" y="1352" width="223" height="73" rx="14"/><rect x="300" y="1426" width="223" height="73" rx="14"/>
</g>
<g fill="#c9d3d9">
<text x="328" y="104" textLength="68" lengthAdjust="spacingAndGlyphs">Track 1</text><text x="328" y="136" textLength="68" lengthAdjust="spacingAndGlyphs">Track 2</text><text x="328" y="168" textLength="68" lengthAdjust="spacingAndGlyphs">Track 3</text><text x="328" y="200" textLength="68" lengthAdjust="spacingAndGlyphs">Track 4</text>
<text x="328" y="750" textLength="81" lengthAdjust="spacingAndGlyphs">Track 12</text>
</g>
<g fill="#c9d3d9" class="big">
<text x="328" y="235" textLength="80" lengthAdjust="spacingAndGlyphs">Track 5</text><text x="328" y="309" textLength="80" lengthAdjust="spacingAndGlyphs">Track 6</text><text x="328" y="383" textLength="80" lengthAdjust="spacingAndGlyphs">Track 7</text><text x="328" y="457" textLength="80" lengthAdjust="spacingAndGlyphs">Track 8</text><text x="328" y="531" textLength="80" lengthAdjust="spacingAndGlyphs">Track 9</text>
<text x="328" y="605" textLength="94" lengthAdjust="spacingAndGlyphs">Track 10</text><text x="328" y="679" textLength="94" lengthAdjust="spacingAndGlyphs">Track 11</text><text x="328" y="785" textLength="94" lengthAdjust="spacingAndGlyphs">Track 13</text><text x="328" y="859" textLength="94" lengthAdjust="spacingAndGlyphs">Track 14</text><text fill="#6f7980" x="328" y="933" textLength="94" lengthAdjust="spacingAndGlyphs">Track 15</text><text x="328" y="1007" textLength="94" lengthAdjust="spacingAndGlyphs">Track 16</text><text x="328" y="1081" textLength="94" lengthAdjust="spacingAndGlyphs">Track 17</text><text x="328" y="1155" textLength="94" lengthAdjust="spacingAndGlyphs">Track 18</text><text fill="#6f7980" x="328" y="1229" textLength="94" lengthAdjust="spacingAndGlyphs">Track 19</text><text x="328" y="1303" textLength="94" lengthAdjust="spacingAndGlyphs">Track 20</text><text x="328" y="1377" textLength="94" lengthAdjust="spacingAndGlyphs">Track 21</text><text x="328" y="1451" textLength="94" lengthAdjust="spacingAndGlyphs">Track 22</text>
</g>
<g fill="#2f3942">
<path d="M352 272h4v4h-4zM360 272h4v4h-4zM368 272h4v4h-4z"/><path d="M352 346h4v4h-4zM360 346h4v4h-4zM368 346h4v4h-4z"/><path d="M352 420h4v4h-4zM360 420h4v4h-4zM368 420h4v4h-4z"/><path d="M352 494h4v4h-4zM360 494h4v4h-4zM368 494h4v4h-4z"/><path d="M352 568h4v4h-4zM360 568h4v4h-4zM368 568h4v4h-4z"/><path d="M352 642h4v4h-4zM360 642h4v4h-4zM368 642h4v4h-4z"/><path d="M352 716h4v4h-4zM360 716h4v4h-4zM368 716h4v4h-4z"/><path d="M352 822h4v4h-4zM360 822h4v4h-4zM368 822h4v4h-4z"/><path d="M352 896h4v4h-4zM360 896h4v4h-4zM368 896h4v4h-4z"/><path d="M352 970h4v4h-4zM360 970h4v4h-4zM368 970h4v4h-4z"/><path d="M352 1044h4v4h-4zM360 1044h4v4h-4zM368 1044h4v4h-4z"/><path d="M352 1118h4v4h-4zM360 1118h4v4h-4zM368 1118h4v4h-4z"/><path d="M352 1192h4v4h-4zM360 1192h4v4h-4zM368 1192h4v4h-4z"/><path d="M352 1266h4v4h-4zM360 1266h4v4h-4zM368 1266h4v4h-4z"/><path d="M352 1340h4v4h-4zM360 1340h4v4h-4zM368 1340h4v4h-4z"/><path d="M352 1414h4v4h-4zM360 1414h4v4h-4zM368 1414h4v4h-4z"/>
</g>
<!-- LEDs -->
<g id="leds">
<g stroke="#5c676c" stroke-width="1.500" fill="#14200f">
<circle cx="502" cy="97" r="10.500"/><circle cx="502" cy="129" r="10.500"/><circle cx="502" cy="161" r="10.500"/><circle cx="502" cy="193" r="10.500"/><circle cx="502" cy="264" r="10.500"/><circle cx="502" cy="338" r="10.500"/><circle cx="502" cy="412" r="10.500"/><circle cx="502" cy="486" r="10.500"/><circle cx="502" cy="560" r="10.500"/><circle cx="502" cy="634" r="10.500"/><circle cx="502" cy="708" r="10.500"/><circle cx="502" cy="743" r="10.500"/><circle cx="502" cy="814" r="10.500"/><circle cx="502" cy="888" r="10.500"/><circle cx="502" cy="962" r="10.500"/><circle cx="502" cy="1036" r="10.500"/><circle cx="502" cy="1110" r="10.500"/><circle cx="502" cy="1184" r="10.500"/><circle cx="502" cy="1258" r="10.500"/><circle cx="502" cy="1332" r="10.500"/><circle cx="502" cy="1406" r="10.500"/>
</g>
<g fill="url(#led)">
<circle cx="502" cy="97" r="8"/><circle cx="502" cy="129" r="8"/><circle cx="502" cy="161" r="8"/><circle cx="502" cy="193" r="8"/><circle cx="502" cy="264" r="8"/><circle cx="502" cy="338" r="8"/><circle cx="502" cy="412" r="8"/><circle cx="502" cy="486" r="8"/><circle cx="502" cy="560" r="8"/><circle cx="502" cy="634" r="8"/><circle cx="502" cy="708" r="8"/><circle cx="502" cy="743" r="8"/><circle cx="502" cy="814" r="8"/><circle cx="502" cy="888" r="8"/><circle cx="502" cy="962" r="8"/><circle cx="502" cy="1036" r="8"/><circle cx="502" cy="1110" r="8"/><circle cx="502" cy="1184" r="8"/><circle cx="502" cy="1258" r="8"/><circle cx="502" cy="1332" r="8"/><circle cx="502" cy="1406" r="8"/>
</g>
</g>

<!-- left column and picker -->
<rect x="0" y="0" width="324" height="1448" fill="#3b464d"/>
<rect x="0" y="80" width="312" height="1331" fill="#2c363d"/>
<rect x="3" y="83" width="277" height="1325" fill="#3d4952"/>
<!-- picker scrollbar -->
<rect x="282" y="83" width="28" height="1325" fill="#343e45"/>
<rect x="283" y="84" width="26" height="26" fill="#4a555d" stroke="#5e6a71" stroke-width="1.500"/><rect x="294" y="88" width="3" height="18" fill="#1f2a31"/>
<rect x="283" y="112" width="26" height="26" fill="#4a555d" stroke="#5e6a71" stroke-width="1.500"/><path d="M290 130L296 123L302 130" fill="none" stroke="#c7d0d5" stroke-width="1.800"/>
<rect x="283" y="140" width="26" height="823" fill="#4f5a62" stroke="#5e6a71" stroke-width="1.500"/>
<rect x="283" y="1382" width="26" height="26" fill="#4a555d" stroke="#5e6a71" stroke-width="1.500"/><path d="M290 1392L296 1399L302 1392" fill="none" stroke="#c7d0d5" stroke-width="1.800"/>
<!-- pattern headers -->
<g fill="url(#hg)" stroke="#363f47" stroke-width="1">
<rect x="9" y="89" width="268" height="25"/><rect x="9" y="201" width="268" height="25"/><rect x="9" y="313" width="268" height="25"/><rect x="9" y="425" width="268" height="25"/><rect x="9" y="537" width="268" height="25"/><rect x="9" y="649" width="268" height="25"/><rect x="9" y="761" width="268" height="25"/><rect x="9" y="873" width="268" height="25"/><rect x="9" y="985" width="268" height="25"/><rect x="9" y="1097" width="268" height="25"/><rect x="9" y="1209" width="268" height="25"/><rect x="9" y="1321" width="268" height="25"/>
</g>
<g><use href="#pi" x="11" y="93"/><use href="#pi" x="11" y="205"/><use href="#pi" x="11" y="317"/><use href="#pi" x="11" y="428"/><use href="#pi" x="11" y="540"/><use href="#pi" x="11" y="764"/><use href="#pi" x="11" y="876"/><use href="#pi" x="11" y="988"/><use href="#pi" x="11" y="1100"/><use href="#pi" x="11" y="1212"/><use href="#pi" x="11" y="1324"/></g>
<circle cx="20.500" cy="661" r="4" fill="#dfe8ee"/>
<g fill="#b9cad6">
<text x="35" y="107">Pattern 1</text><text x="35" y="219">Pattern 2</text><text x="35" y="331">Pattern 3</text><text x="35" y="443">Pattern 4</text><text x="35" y="555">Pattern 5</text><text x="35" y="667">'</text><text x="35" y="779">'</text><text x="35" y="891">Pattern 8</text><text x="35" y="1003">Pattern 9</text><text x="35" y="1115">Pattern 10</text><text x="35" y="1227">Pattern 11</text><text x="35" y="1339">Pattern 12</text>
</g>
<g fill="#a7b2b9">
<path d="M41 116H75V129H41ZM176 116H210V129H176ZM75 142H84V155H75ZM210 142H218V155H210ZM8 181H41V194H8ZM84 181H176V194H84ZM218 181H277V194H218Z"/>
<path d="M75 229H92V236H75ZM8 249H75V257H8ZM92 263H210V271H92ZM159 284H210V292H159ZM210 298H277V306H210Z"/>
<path d="M176 340H210V344H176ZM142 347H176V351H142ZM8 358H41V362H8ZM126 358H142V362H126ZM260 358H277V362H260ZM41 365H75V369H41ZM176 365H210V369H176ZM8 372H41V376H8ZM75 372H176V376H75ZM210 372H277V376H210ZM41 376H75V379H41ZM75 382H142V386H75ZM210 382H277V386H210ZM176 389H210V393H176ZM8 400H41V404H8ZM142 400H176V404H142ZM41 407H75V411H41ZM75 414H142V418H75ZM210 414H277V418H210Z"/>
<path d="M8 452H116V459H8ZM169 464H224V470H169ZM116 476H169V482H116ZM8 506H116V512H8ZM169 512H224V518H169ZM116 523H169V529H116Z"/>
<path d="M247 618H277V624H247Z"/>
<path d="M8 788H15.500V804H8ZM16.500 788H24V804H16.500ZM33 788H41V804H33ZM42 788H50V804H42ZM54 788H62V804H54ZM67 788H75V804H67ZM75 819H83V834H75ZM84 819H91V834H84ZM100 819H108V834H100ZM109 819H117V834H109ZM122 819H129V834H122ZM134 819H142V834H134ZM142 850H150V865H142ZM151 850H158V865H151ZM168 850H175V865H168ZM176 850H184V865H176ZM189 850H196V865H189ZM201 850H208V865H201ZM209 850H216V865H209ZM217 850H226V865H217ZM235 850H243V865H235ZM244 850H251V865H244ZM256 850H263V865H256ZM269 850H277V865H269Z"/>
<path d="M14 901h5v6h-5zM36 912h5v6h-5zM47 924h5v6h-5zM81 924h5v6h-5zM8 942h5v6h-5zM86 942h5v6h-5zM69 954h5v6h-5zM64 972h5v6h-5zM193 901h5v6h-5zM198 912h5v6h-5zM232 924h5v6h-5zM260 924h5v6h-5zM187 942h5v6h-5zM266 942h5v6h-5zM249 954h5v6h-5zM243 972h5v6h-5z"/>
<path d="M14 1013h5v6h-5zM47 1024h5v6h-5zM81 1036h5v6h-5zM8 1054h5v6h-5zM86 1054h5v6h-5zM36 1066h5v6h-5zM69 1066h5v6h-5zM64 1083h5v6h-5zM193 1013h5v6h-5zM204 1036h5v6h-5zM260 1036h5v6h-5zM187 1054h5v6h-5zM215 1054h5v6h-5zM266 1054h5v6h-5zM227 1066h5v6h-5zM249 1066h5v6h-5zM243 1083h5v6h-5z"/>
<path d="M12 1140h4v4h-4zM54 1140h4v4h-4zM84 1140h4v4h-4zM96 1140h4v4h-4zM109 1140h4v4h-4zM126 1140h4v4h-4zM139 1140h4v4h-4zM202 1140h4v4h-4zM105 1132h4v4h-4zM134 1132h4v4h-4zM252 1124h4v4h-4zM16 1151h4v4h-4zM29 1151h4v4h-4zM42 1151h4v4h-4zM58 1151h4v4h-4zM71 1151h4v4h-4zM151 1159h4v4h-4zM164 1159h4v4h-4zM176 1159h4v4h-4zM193 1159h4v4h-4zM206 1159h4v4h-4zM218 1159h4v4h-4zM231 1159h4v4h-4zM243 1159h4v4h-4zM260 1159h4v4h-4zM273 1159h4v4h-4zM8 1198h4v4h-4zM21 1198h4v4h-4zM33 1198h4v4h-4zM50 1198h4v4h-4zM62 1198h4v4h-4zM75 1198h4v4h-4zM88 1198h4v4h-4zM100 1198h4v4h-4zM117 1198h4v4h-4zM130 1198h4v4h-4zM142 1198h4v4h-4zM155 1198h4v4h-4zM168 1198h4v4h-4zM185 1198h4v4h-4zM197 1198h4v4h-4zM209 1198h4v4h-4zM222 1198h4v4h-4zM235 1198h4v4h-4zM252 1198h4v4h-4zM264 1198h4v4h-4z"/>
<path d="M8 1237H142V1243H8ZM210 1248H277V1254H210ZM142 1260H210V1266H142ZM8 1290H142V1296H8ZM210 1296H277V1302H210ZM142 1308H210V1314H142Z"/>
<path d="M8 1379H142V1382.500H8ZM142 1388H210V1392H142ZM210 1382H277V1386H210Z"/>
</g>
<rect x="8.500" y="424.500" width="269" height="105" fill="none" stroke="#a9d24a" stroke-width="1.500"/>
<path d="M7 465L20 476L7 488L6 488Z" fill="#e0345f" stroke="#2a1a20" stroke-width="1"/>
<!-- bottom add -->
<path d="M141 1422h4v7h7v4h-7v7h-4v-7h-7v-4h7z" fill="#d7dee2"/>
<!-- top-left icons -->
<path d="M33 42H63V64H33Z" fill="#e8edf0"/><path d="M39 42H42V55H39ZM46 42H50V55H46ZM54 42H57V55H54Z" fill="#3b464d"/>
<use href="#wv" x="123" y="38" fill="#4d5960"/>
<g fill="none" stroke="#545f68" stroke-width="2.400"><circle cx="228" cy="60" r="4"/><circle cx="250" cy="44" r="4"/><path d="M231 57L247 47"/></g>

<!-- tab and tools -->
<path d="M324 80C326 55 340 14 346 8Q350 3 356 3H382V80Z" fill="#47525a" stroke="#55606a" stroke-width="1"/>
<path d="M355 50h4v5.500h6v4h-6v5.500h-4v-5.500h-6v-4h6z" fill="#dfe5e8"/>
<rect x="384" y="3" width="160" height="76" fill="#47525a" stroke="#55606a" stroke-width="1"/>
<use href="#wv" x="393.500" y="7" fill="#5f6b72"/>
<g fill="none" stroke="#dde4e8" stroke-width="2.400"><circle cx="457" cy="29" r="4.200"/><circle cx="479" cy="13" r="4.200"/><path d="M460 26L476 16"/></g>
<path d="M502 10H533V32H502Z" fill="#6a757c"/><path d="M508 10H511V23H508ZM516 10H520V23H516ZM524 10H527V23H524Z" fill="#47525a"/>
<g class="s14" fill="#c0cad0"><text x="404" y="68" textLength="30" lengthAdjust="spacingAndGlyphs">STEP</text><text x="471.500" y="68" textLength="36" lengthAdjust="spacingAndGlyphs">SLIDE</text></g>
<rect x="439" y="53" width="21" height="20" rx="6" fill="none" stroke="#b8c2c8" stroke-width="2"/>
<circle cx="522.500" cy="63" r="8" fill="none" stroke="#5f6b72" stroke-width="3"/><circle cx="522.500" cy="63" r="3.500" fill="#dde4e8"/>
</svg>
</body></html>
